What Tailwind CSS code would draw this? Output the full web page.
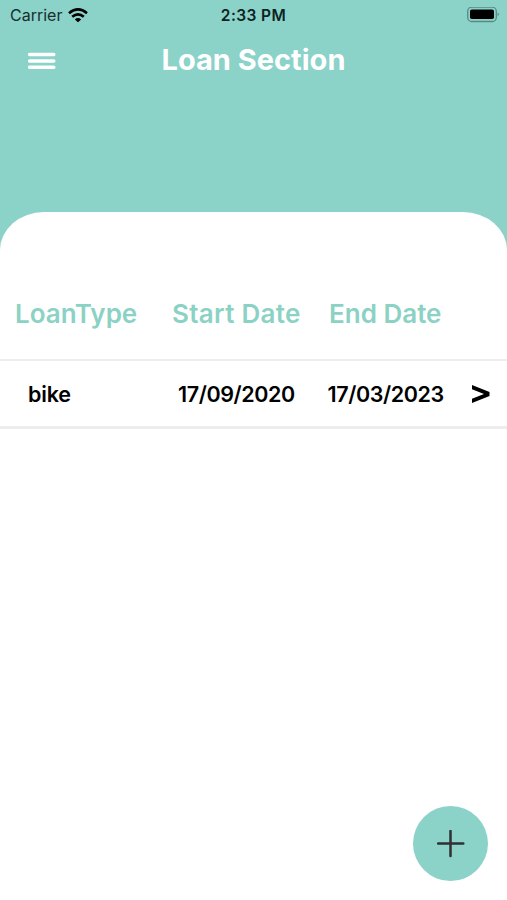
<!DOCTYPE html>
<html lang="en"><head><meta charset="utf-8"><title>Loan Section</title>
<script src="https://cdn.jsdelivr.net/npm/@tailwindcss/browser@4"></script></head>
<body class="bg-[#8bd2c9]">
<div class="relative flex flex-col w-[507px] h-[900px] overflow-hidden font-['Inter',sans-serif] text-black whitespace-nowrap">
<header class="h-[212px] shrink-0">
<div class="grid grid-cols-3 h-[30px] items-center pl-[10px] pr-[8px]">
<div class="flex items-center gap-[6px] text-[#18302d]"><span class="text-[16px] leading-5 w-[52px]">Carrier</span>
<svg class="text-black" width="20" height="15" viewBox="0 0 20 15"><g fill="none" stroke="currentColor" stroke-width="2.6"><path d="M1 5.2Q10-2.4 19 5.2M4.2 8.8Q10 3.8 15.8 8.8"/></g><path d="M6.8 11.4Q10 8.8 13.2 11.4L10 14.2Z"/></svg></div>
<span class="justify-self-center pt-px -ml-[2px] text-[15.5px] leading-5 font-semibold tracking-[0.4px] text-[#0b2422]">2:33 PM</span>
<svg class="justify-self-end" width="32" height="16" viewBox="0 0 32 16"><rect x=".7" y=".2" width="28.6" height="14.3" rx="4" fill="none" stroke="#5b8983" stroke-width="1.3"/><rect x="3" y="2.5" width="24" height="9.6" rx="1.8"/><path d="M30.6 5.3q2.4 2 0 4.2z" fill="#5b8983"/></svg>
</div>
<div class="grid grid-cols-[1fr_auto_1fr] items-center h-[61px] px-[28px]">
<svg width="28" height="18"><path d="M1.7 2.4H25.8M1.7 9H25.8M1.7 15.3H25.8" stroke="#fff" stroke-width="3.5" stroke-linecap="round"/></svg>
<h1 class="text-[29px] leading-9 font-bold text-white -mt-px">Loan Section</h1>
</div>
</header>
<main class="flex-1 bg-white rounded-t-[44px_38px] pt-[71px]">
<div class="grid grid-cols-[157px_157px_1fr] h-[62px] items-center pl-[15px] text-[26px] leading-8 font-semibold text-[#8bd2c5]">
<span>LoanType</span><span class="tracking-[0.3px]">Start Date</span><span>End Date</span>
</div>
<div class="mt-[14px] grid grid-cols-[150px_149.5px_143.5px_1fr] h-[70px] items-center pl-[28px] border-t-[2px] border-b-[3px] border-[#ededee] text-[21.5px] leading-7 font-semibold">
<span class="tracking-[-0.2px]">bike</span><span class="tracking-[-0.4px]">17/09/2020</span><span class="tracking-[-0.4px]">17/03/2023</span>
<svg width="19" height="18" viewBox="0 0 19 18"><path d="M1 0L18.5 7V11L1 18V13.8L13 9L1 4.2Z"/></svg>
</div>
</main>
<button aria-label="Add loan" class="absolute left-[413px] top-[806px] size-[75px] rounded-full bg-[#8bd2c9] grid place-items-center"><svg width="28" height="28" viewBox="0 0 28 28"><path d="M13.5 1V26M1 13.5H26.3" stroke="#302f32" stroke-width="2.5" stroke-linecap="round"/></svg></button>
</div></body></html>
